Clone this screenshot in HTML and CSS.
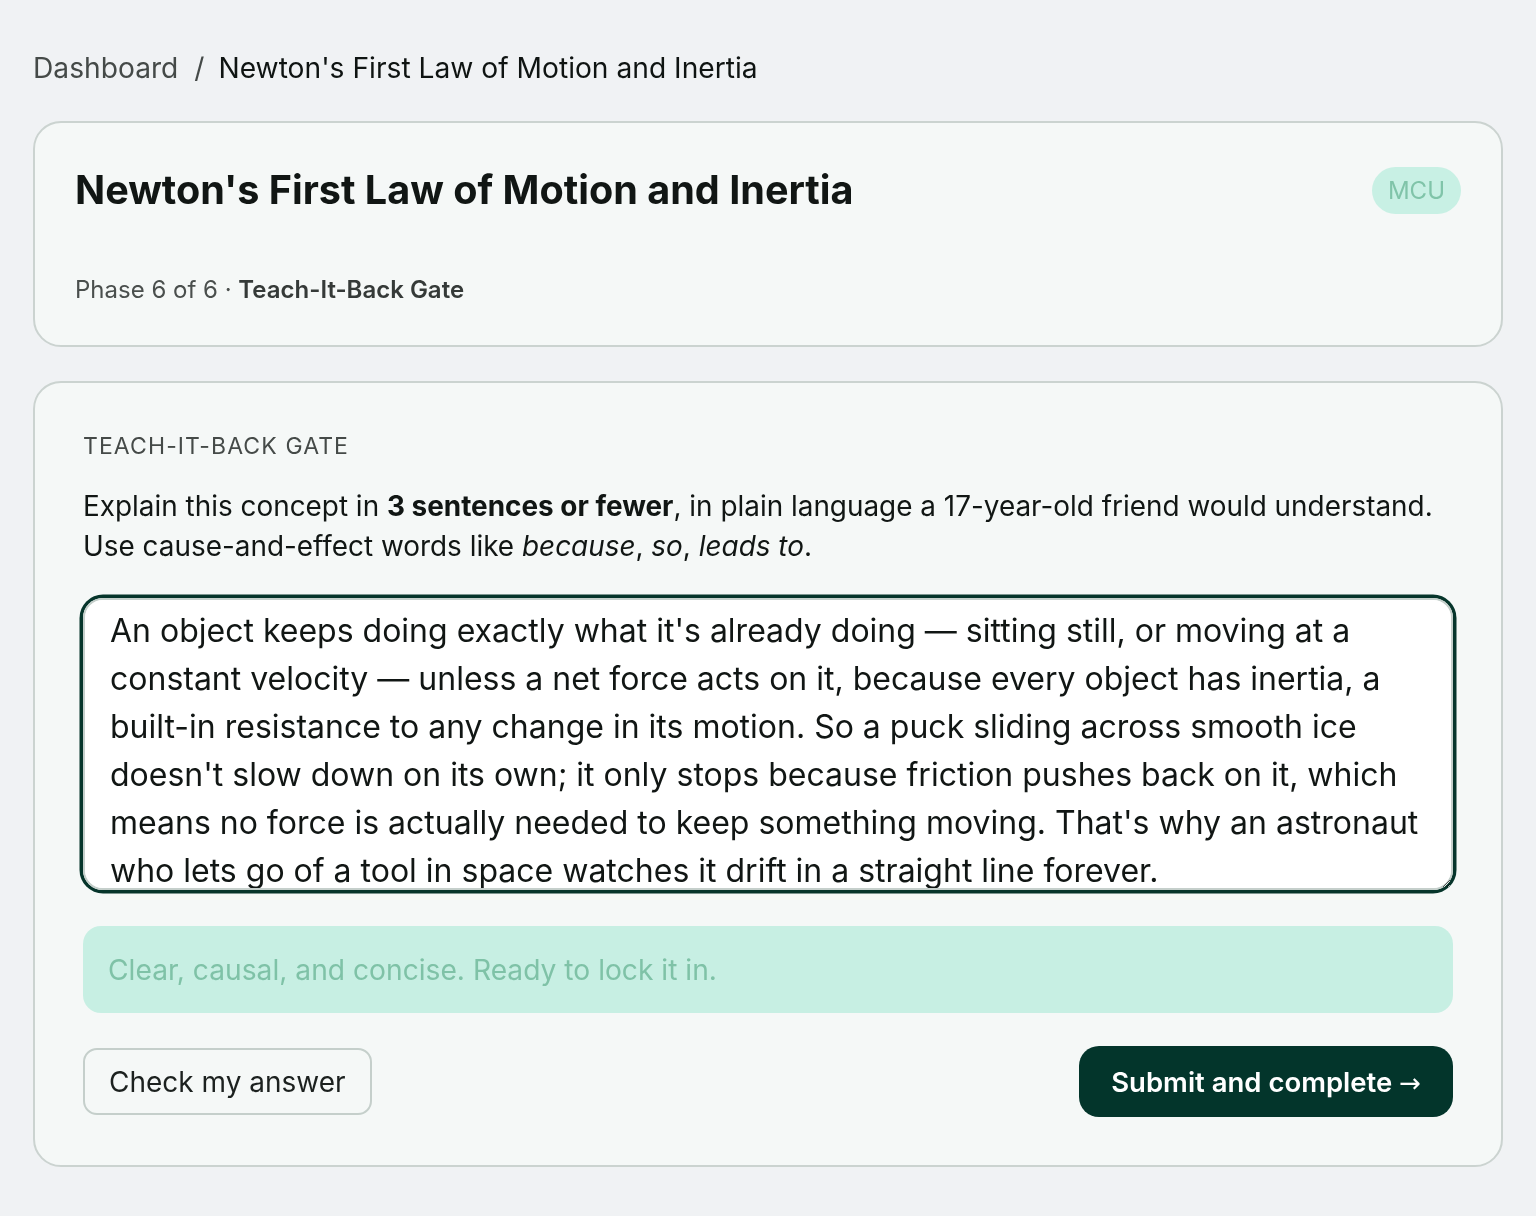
FILE: index.html
```html
<!DOCTYPE html>
<html lang="en">
<head>
    <meta charset="UTF-8">
    <meta name="viewport" content="width=device-width, initial-scale=1.0">
    <title>Newton's First Law of Motion and Inertia</title>
    <link rel="stylesheet" href="styles.css">
</head>
<body>
    <div class="page">
        <nav class="breadcrumb">
            <a href="#" class="crumb-link">Dashboard</a>
            <span class="crumb-sep">/</span>
            <span class="crumb-current">Newton's First Law of Motion and Inertia</span>
        </nav>

        <section class="card header-card">
            <div class="header-top">
                <h1>Newton's First Law of Motion and Inertia</h1>
                <span class="badge">MCU</span>
            </div>
            <p class="phase">Phase 6 of 6 · <strong>Teach-It-Back Gate</strong></p>
        </section>

        <section class="card gate-card">
            <div class="gate-label">TEACH-IT-BACK GATE</div>
            <p class="gate-prompt">Explain this concept in <strong>3 sentences or fewer</strong>, in plain language a 17-year-old friend would understand. Use cause-and-effect words like <em>because</em>, <em>so</em>, <em>leads to</em>.</p>

            <textarea class="answer" id="answer">An object keeps doing exactly what it's already doing — sitting still, or moving at a constant velocity — unless a net force acts on it, because every object has inertia, a built-in resistance to any change in its motion. So a puck sliding across smooth ice doesn't slow down on its own; it only stops because friction pushes back on it, which means no force is actually needed to keep something moving. That's why an astronaut who lets go of a tool in space watches it drift in a straight line forever.</textarea>

            <div class="feedback">Clear, causal, and concise. Ready to lock it in.</div>

            <div class="actions">
                <button type="button" class="btn-outline">Check my answer</button>
                <button type="button" class="btn-primary">Submit and complete <span class="arrow">→</span></button>
            </div>
        </section>
    </div>
</body>
</html>
```

FILE: styles.css
```css
body {
    font-family: Inter, 'Noto Sans', sans-serif;
    margin: 0;
    background-color: #f0f2f4;
    color: #151a18;
}
.page {
    padding: 51px 33px 48px 33px;
}
.breadcrumb {
    font-size: 28.2px;
    line-height: 34px;
    margin-bottom: 36px;
}
.crumb-link {
    color: #454a48;
    text-decoration: none;
}
.crumb-sep {
    color: #454a48;
    margin: 0 6px 0 8px;
}
.crumb-current {
    color: #0f1412;
}
.card {
    background-color: #f5f8f7;
    border: 2px solid #cbd3d0;
    border-radius: 28px;
}
.header-card {
    padding: 40px;
}
.header-top {
    display: flex;
    justify-content: space-between;
    align-items: center;
}
h1 {
    margin: 0;
    font-size: 39.6px;
    line-height: 54px;
    font-weight: 700;
    color: #111614;
}
.badge {
    background-color: #c8f0e4;
    color: #80c4a9;
    font-size: 24px;
    line-height: 29px;
    padding: 9px 16px;
    border-radius: 24px;
}
.phase {
    margin: 58px 0 0 0;
    font-size: 24px;
    line-height: 30px;
    color: #4a4f4d;
}
.phase strong {
    color: #353a38;
    font-weight: 600;
}
.gate-card {
    margin-top: 34px;
    padding: 48px;
}
.gate-label {
    font-size: 23px;
    line-height: 30px;
    letter-spacing: 1.1px;
    color: #454a48;
}
.gate-prompt {
    margin: 25px 0 0 0;
    font-size: 27.9px;
    line-height: 40px;
    color: #111614;
}
.gate-prompt strong {
    font-weight: 700;
}
.answer {
    display: block;
    box-sizing: border-box;
    width: 100%;
    height: 292px;
    margin-top: 32px;
    padding: 7px 24px 0 25px;
    font-family: Inter, 'Noto Sans', sans-serif;
    font-size: 32px;
    line-height: 48px;
    color: #111614;
    background-color: #fff;
    border: 2px solid #c5cfcb;
    border-radius: 20px;
    box-shadow: 0 0 0 3.5px #06352b;
    outline: none;
    overflow-y: auto;
    scrollbar-width: none;
    resize: vertical;
}
.feedback {
    margin-top: 36px;
    background-color: #c7efe3;
    color: #7fc2a7;
    border-radius: 18px;
    padding: 0 25px;
    height: 87px;
    display: flex;
    align-items: center;
    font-size: 28.2px;
}
.actions {
    margin-top: 33px;
    display: flex;
    justify-content: space-between;
    align-items: center;
}
.btn-outline {
    font-family: Inter, 'Noto Sans', sans-serif;
    font-size: 28px;
    color: #1c211f;
    background-color: transparent;
    border: 2px solid #c5cfcb;
    border-radius: 14px;
    height: 67px;
    padding: 0 24px;
    cursor: pointer;
}
.btn-primary {
    font-family: Inter, 'Noto Sans', sans-serif;
    font-size: 27.5px;
    font-weight: 600;
    color: #fff;
    background-color: #03352b;
    border: none;
    border-radius: 20px;
    height: 71px;
    padding: 0 32px;
    cursor: pointer;
}
.arrow {
    font-family: 'DejaVu Sans', sans-serif;
    font-weight: 400;
    font-size: 26px;
}
```
